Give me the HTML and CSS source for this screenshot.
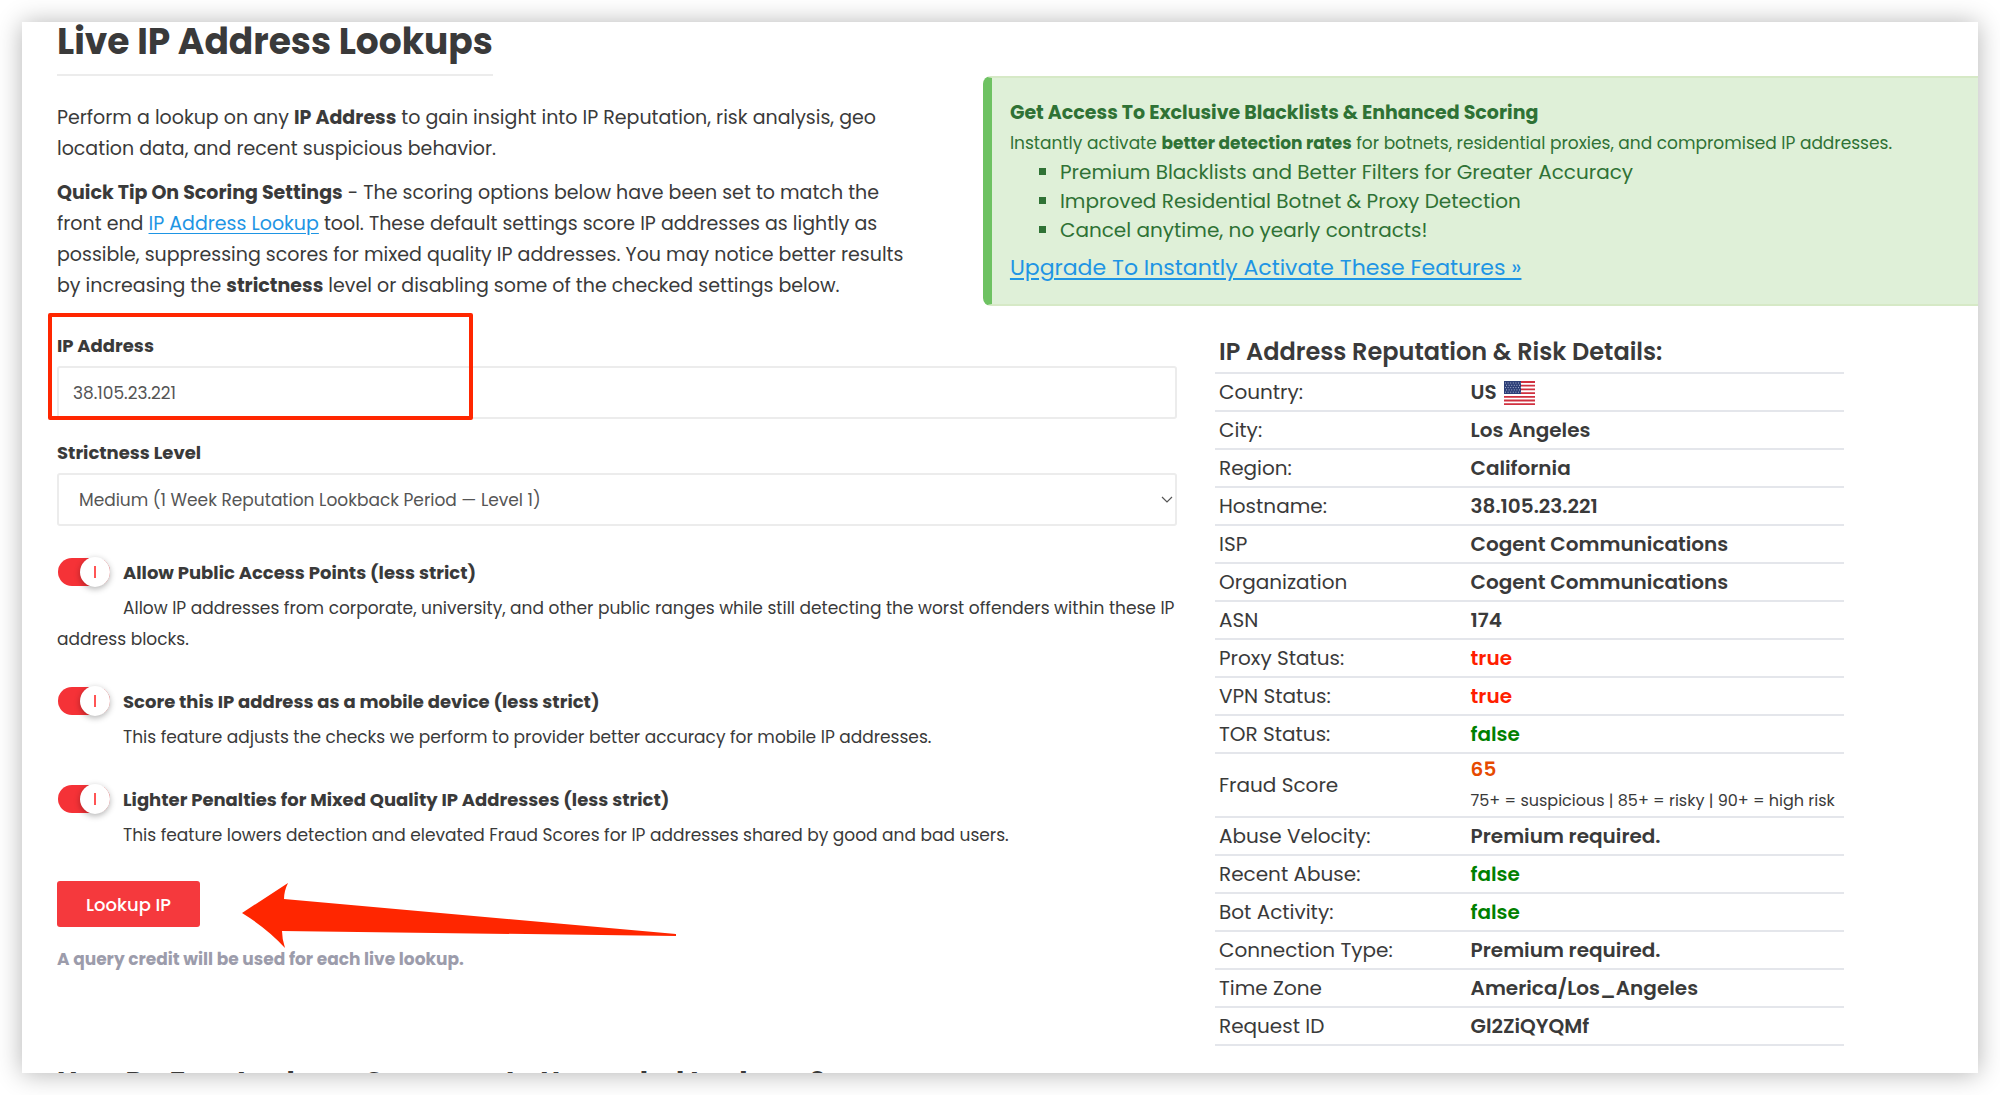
FILE: index.html
```html
<!DOCTYPE html>
<html lang="en">
<head>
    <meta charset="UTF-8">
    <title>Live IP Address Lookups</title>
    <link rel="stylesheet" href="styles.css">
</head>
<body>
<div class="panel">
    <!-- intro -->
    <div class="top">
        <div class="intro">
            <h1>Live IP Address Lookups</h1>
            <p>Perform a lookup on any <b>IP Address</b> to gain insight into IP Reputation, risk analysis, geo location data, and recent suspicious behavior.</p>
            <p><b>Quick Tip On Scoring Settings</b> - The scoring options below have been set to match the front end <a href="#">IP Address Lookup</a> tool. These default settings score IP addresses as lightly as possible, suppressing scores for mixed quality IP addresses. You may notice better results by increasing the <b>strictness</b> level or disabling some of the checked settings below.</p>
        </div>
        <div class="alert">
            <h4>Get Access To Exclusive Blacklists &amp; Enhanced Scoring</h4>
            <p>Instantly activate <b>better detection rates</b> for botnets, residential proxies, and compromised IP addresses.</p>
            <ul>
                <li>Premium Blacklists and Better Filters for Greater Accuracy</li>
                <li>Improved Residential Botnet &amp; Proxy Detection</li>
                <li>Cancel anytime, no yearly contracts!</li>
            </ul>
            <a class="upgrade" href="#">Upgrade To Instantly Activate These Features »</a>
        </div>
    </div>

    <div class="main">
        <!-- lookup form -->
        <form class="lookup">
            <div class="field">
                <label for="ip">IP Address</label>
                <input type="text" id="ip" class="control" value="38.105.23.221">
                <span class="mark-box"></span>
            </div>
            <div class="field">
                <label for="strictness">Strictness Level</label>
                <div class="select">
                    <select id="strictness" class="control">
                        <option>Medium (1 Week Reputation Lookback Period — Level 1)</option>
                    </select>
                    <svg class="chevron" width="12" height="8" viewBox="0 0 12 8"><path d="M1 1l5 5 5-5" fill="none" stroke="#555" stroke-width="1.2"/></svg>
                </div>
            </div>

            <div class="option">
                <div class="option-head">
                    <input type="checkbox" id="public" class="switch" checked>
                    <label for="public">Allow Public Access Points (less strict)</label>
                </div>
                <p>Allow IP addresses from corporate, university, and other public ranges while still detecting the worst offenders within these IP address blocks.</p>
            </div>
            <div class="option">
                <div class="option-head">
                    <input type="checkbox" id="mobile" class="switch" checked>
                    <label for="mobile">Score this IP address as a mobile device (less strict)</label>
                </div>
                <p>This feature adjusts the checks we perform to provider better accuracy for mobile IP addresses.</p>
            </div>
            <div class="option">
                <div class="option-head">
                    <input type="checkbox" id="lighter" class="switch" checked>
                    <label for="lighter">Lighter Penalties for Mixed Quality IP Addresses (less strict)</label>
                </div>
                <p>This feature lowers detection and elevated Fraud Scores for IP addresses shared by good and bad users.</p>
            </div>

            <div class="submit">
                <button type="button" class="btn">Lookup IP</button>
                <svg class="arrow" width="436" height="66" viewBox="0 0 436 66"><path d="M0 30L46 0Q42 8 42 16L434 51V53L40 48Q40 56 43 65Q26 46 0 30Z" fill="#ff2600"/></svg>
            </div>
            <p class="note">A query credit will be used for each live lookup.</p>
        </form>

        <!-- result -->
        <div class="details">
            <h3>IP Address Reputation &amp; Risk Details:</h3>
            <table>
                <tr><td>Country:</td><th>US
                    <svg class="flag" width="31" height="24" viewBox="0 0 31 24">
                        <path d="M0 0h31v24H0z" fill="#fff"/>
                        <path d="M0 1h31M0 4.7h31M0 8.4h31M0 12.1h31M0 15.8h31M0 19.5h31M0 23.1h31" stroke="#d0303f" stroke-width="1.8"/>
                        <path d="M0 0h17v13H0z" fill="#2d3f78"/>
                        <path d="M1 2h16M2 4.3h15M1 6.6h16M2 8.9h15M1 11.2h16" stroke="#a9b3d0" stroke-width="1" stroke-dasharray="1 1.6"/>
                    </svg></th></tr>
                <tr><td>City:</td><th>Los Angeles</th></tr>
                <tr><td>Region:</td><th>California</th></tr>
                <tr><td>Hostname:</td><th>38.105.23.221</th></tr>
                <tr><td>ISP</td><th>Cogent Communications</th></tr>
                <tr><td>Organization</td><th>Cogent Communications</th></tr>
                <tr><td>ASN</td><th>174</th></tr>
                <tr><td>Proxy Status:</td><th class="red">true</th></tr>
                <tr><td>VPN Status:</td><th class="red">true</th></tr>
                <tr><td>TOR Status:</td><th class="green">false</th></tr>
                <tr><td>Fraud Score</td><th><span class="orange">65</span><small>75+ = suspicious | 85+ = risky | 90+ = high risk</small></th></tr>
                <tr><td>Abuse Velocity:</td><th>Premium required.</th></tr>
                <tr><td>Recent Abuse:</td><th class="green">false</th></tr>
                <tr><td>Bot Activity:</td><th class="green">false</th></tr>
                <tr><td>Connection Type:</td><th>Premium required.</th></tr>
                <tr><td>Time Zone</td><th>America/Los_Angeles</th></tr>
                <tr><td>Request ID</td><th>Gl2ZiQYQMf</th></tr>
            </table>
        </div>
    </div>

    <h2>How Do Free Lookups Compare to Upgraded Lookups?</h2>
</div>
</body>
</html>
```
FILE: styles.css
```css
*{
    box-sizing:border-box;
    margin:0;
    padding:0;
}
body{
    height:100vh;
    padding:22px;
    overflow:hidden;
    background-color:#fff;
    font-family:Poppins, Inter, "Open Sans", sans-serif;
    font-size:20px;
    color:#3a3a3a;
}
a{
    color:#1e95e4;
    text-underline-offset:3px;
}
.panel{
    height:100%;
    overflow:hidden;
    background-color:#fff;
    box-shadow:0 1px 24px rgba(0,0,0,.3);
}
/* intro */
.top{
    display:flex;
    align-items:flex-start;
    justify-content:space-between;
    padding-left:35px;
}
.intro{
    width:45%;
    font-size:19px;
}
.intro h1{
    display:inline-block;
    height:54px;
    margin-bottom:26px;
    border-bottom:2px solid #ececec;
    font-size:36px;
    line-height:40px;
    font-weight:700;
    white-space:nowrap;
}
.intro p{
    margin-bottom:13px;
    line-height:31px;
}
.alert{
    width:51.8%;
    height:230px;
    margin-top:54px;
    padding:19px 20px 19px 18px;
    border:2px solid #d6e9c6;
    border-left:9px solid #6ec262;
    border-right:0;
    border-radius:8px 0 0 8px;
    background-color:#dff0d8;
    color:#2f7235;
}
.alert h4{
    font-size:19px;
    line-height:31px;
    font-weight:700;
}
.alert p{
    font-size:17px;
    line-height:30px;
    white-space:nowrap;
}
.alert ul{
    padding-left:50px;
    list-style:square;
    line-height:29px;
}
.upgrade{
    display:block;
    font-size:22px;
    line-height:46px;
}
/* form */
.main{
    display:flex;
    gap:38px;
    padding-left:35px;
    padding-right:134px;
}
.lookup{
    flex:1;
    padding-top:12px;
}
.field{
    position:relative;
    margin-bottom:14px;
}
.field label{
    display:block;
    font-size:18px;
    line-height:40px;
    font-weight:700;
}
.control{
    display:block;
    width:100%;
    height:53px;
    padding:0 14px;
    border:2px solid #ececec;
    border-radius:3px;
    background-color:#fff;
    font-family:inherit;
    font-size:17px;
    color:#555;
}
.select{
    position:relative;
}
select.control{
    appearance:none;
    padding:0 20px;
}
.chevron{
    position:absolute;
    top:23px;
    right:4px;
    pointer-events:none;
}
/* red frame round the address */
.mark-box{
    position:absolute;
    top:-13px;
    left:-9px;
    width:425px;
    height:107px;
    border:4px solid #ff2600;
    border-radius:2px;
    pointer-events:none;
}
.option{
    padding-top:16px;
    margin-right:-8px;
    margin-bottom:14px;
}
.option-head{
    display:flex;
    align-items:center;
    gap:13px;
    height:32px;
    padding-left:1px;
    font-size:18px;
    font-weight:700;
}
.option p{
    padding-top:5px;
    font-size:17px;
    line-height:31px;
    text-indent:66px;
}
.switch{
    appearance:none;
    display:flex;
    align-items:center;
    justify-content:flex-end;
    width:52px;
    height:28px;
    border-radius:14px;
    background-color:#f53237;
}
.switch::before{
    content:"";
    width:30px;
    height:30px;
    border-radius:50%;
    background:linear-gradient(#f55,#f55) center/2px 12px no-repeat #fff;
    box-shadow:0 2px 6px rgba(0,0,0,.3);
}
.submit{
    position:relative;
    margin-top:30px;
}
.btn{
    width:143px;
    height:46px;
    border:0;
    border-radius:3px;
    background-color:#f5393d;
    font-family:inherit;
    font-size:18px;
    font-weight:500;
    color:#fff;
}
.arrow{
    position:absolute;
    top:2px;
    left:185px;
}
.note{
    margin-top:16px;
    font-size:17px;
    line-height:32px;
    font-weight:700;
    color:#9c9cab;
}
/* result */
.details{
    width:35.2%;
    padding-top:20px;
}
.details h3{
    padding-left:4px;
    font-size:24px;
    line-height:36px;
    font-weight:600;
}
.details table{
    width:100%;
    margin-top:2px;
    border-collapse:collapse;
    border-top:2px solid #e4e6eb;
}
.details td,
.details th{
    height:38px;
    padding:0 4px;
    border-bottom:2px solid #e4e6eb;
    line-height:31px;
    text-align:left;
}
.details td{
    width:40%;
}
.details th{
    font-weight:600;
    white-space:nowrap;
}
.details small{
    display:block;
    font-size:16px;
    font-weight:400;
}
.flag{
    margin-left:3px;
    vertical-align:middle;
}
.red{
    color:#ff1e00;
}
.green{
    color:#008000;
}
.orange{
    color:#e64a00;
}
.panel h2{
    padding:16px 35px;
    font-size:28px;
}
```
